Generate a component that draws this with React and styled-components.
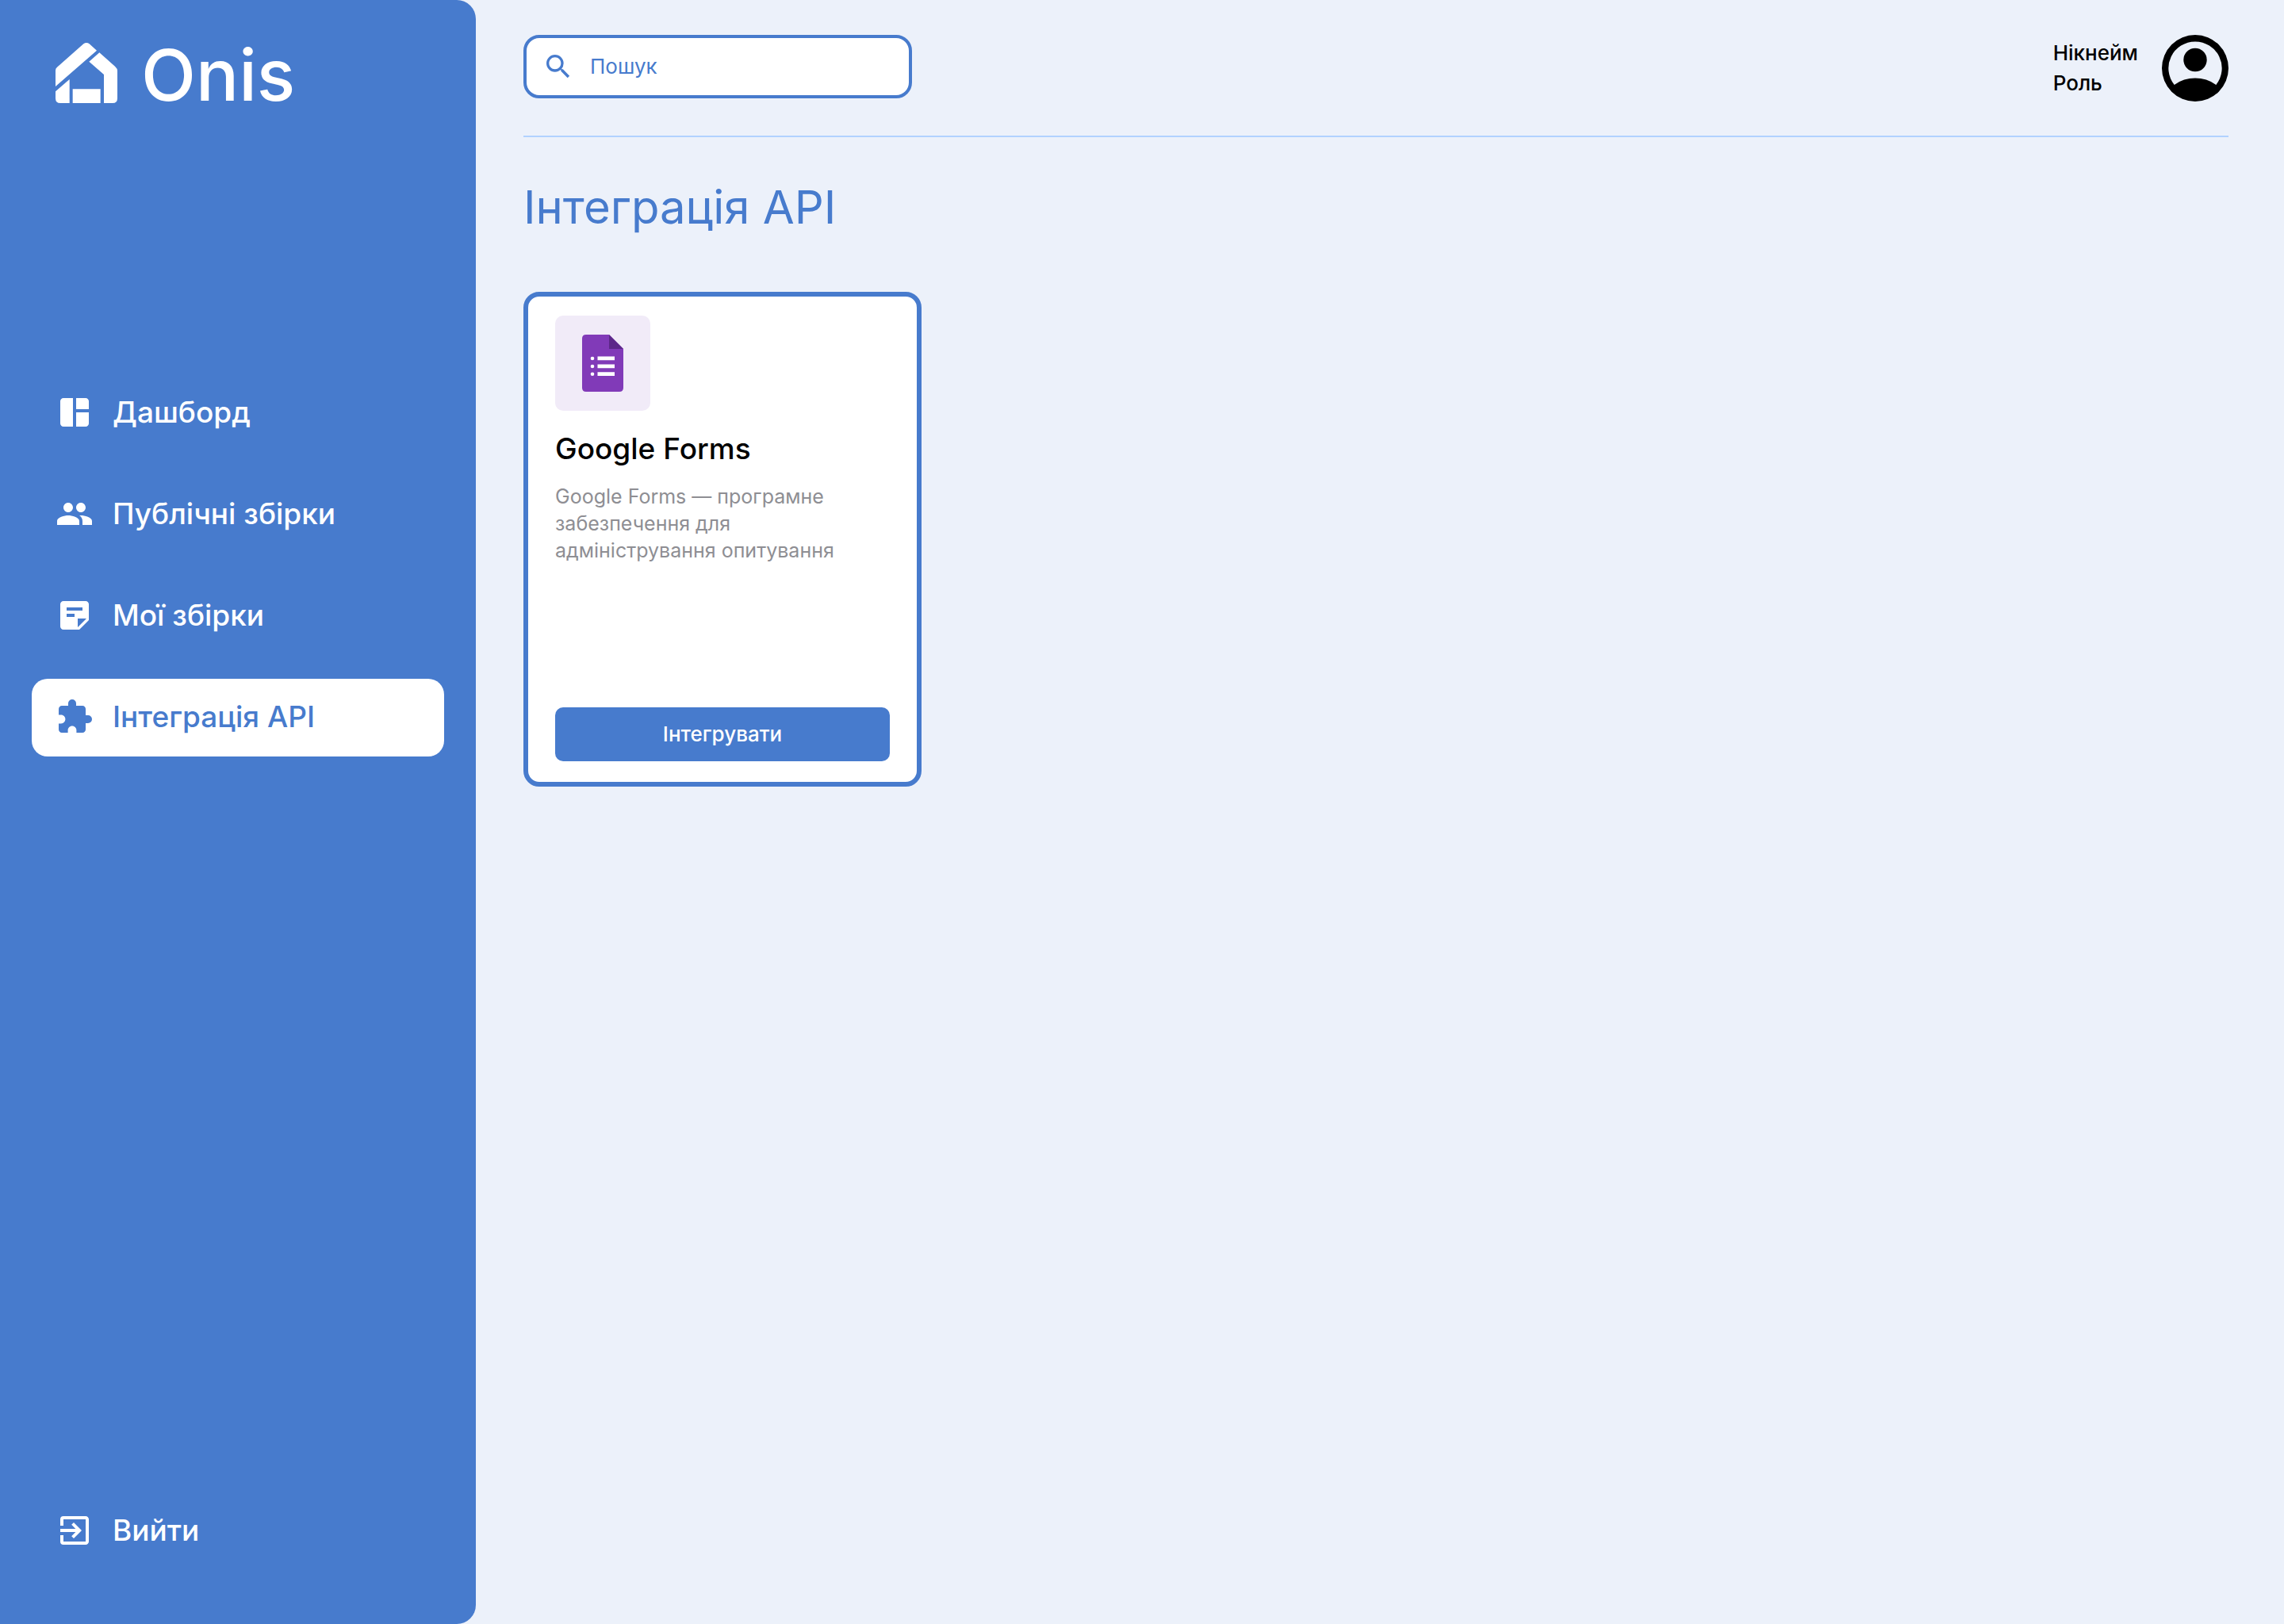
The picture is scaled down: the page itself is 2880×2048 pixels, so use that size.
import React from "react";
import styled, { createGlobalStyle, css } from "styled-components";
import {
  MdSpaceDashboard,
  MdPeople,
  MdExtension,
  MdExitToApp,
  MdSearch,
} from "react-icons/md";

const BLUE = "#477bcd";

const GlobalStyle = createGlobalStyle`
  *, *::before, *::after { box-sizing: border-box; }
  body {
    margin: 0;
    background: #ecf1fa;
    color: #000;
    font-family: Inter, "Liberation Sans", sans-serif;
  }
  h1, h2, p, ul { margin: 0; padding: 0; }
  button, input { font-family: inherit; }
`;

const Page = styled.div`
  display: grid;
  grid-template-columns: 600px 1fr;
  min-height: 100vh;
`;

const Sidebar = styled.aside`
  display: flex;
  flex-direction: column;
  padding: 36px 40px 68px;
  border-radius: 0 24px 24px 0;
  background: ${BLUE};
  color: #fff;
`;

const Brand = styled.a`
  display: flex;
  align-items: flex-end;
  gap: 30px;
  height: 94px;
  padding-left: 30px;
  color: inherit;
  text-decoration: none;
  font-size: 90px;
  line-height: 70px;
  font-weight: 500;
`;

const Menu = styled.ul`
  display: flex;
  flex-direction: column;
  gap: 30px;
  margin-top: 342px;
  list-style: none;
`;

const menuEntry = css`
  display: flex;
  align-items: center;
  gap: 24px;
  width: 100%;
  height: 98px;
  padding: 0 30px 2px;
  border: 0;
  border-radius: 20px;
  font-size: 37px;
  line-height: 48px;
  font-weight: 500;
  text-decoration: none;
  white-space: nowrap;

  svg { flex: none; width: 48px; height: 48px; }
`;

const MenuLink = styled.a`
  ${menuEntry}
  background: ${(p) => (p.$active ? "#fff" : "transparent")};
  color: ${(p) => (p.$active ? BLUE : "#fff")};
`;

const LogoutButton = styled.button`
  ${menuEntry}
  margin-top: auto;
  background: transparent;
  color: #fff;
  cursor: pointer;
`;

const Main = styled.main`
  min-width: 0;
  padding: 44px 70px 44px 60px;
`;

const TopBar = styled.header`
  display: flex;
  justify-content: space-between;
  align-items: flex-start;
  height: 129px;
  border-bottom: 2px solid #b1d2ff;
`;

const SearchField = styled.label`
  display: flex;
  align-items: center;
  gap: 20px;
  width: 490px;
  height: 80px;
  padding: 0 20px;
  border: 4px solid ${BLUE};
  border-radius: 20px;
  background: #fff;
  color: ${BLUE};

  svg { flex: none; width: 40px; height: 40px; }
`;

const SearchInput = styled.input`
  flex: 1;
  min-width: 0;
  padding: 0;
  border: 0;
  outline: 0;
  background: transparent;
  color: inherit;
  font-size: 26px;
  line-height: 34px;

  &::placeholder { color: inherit; opacity: 1; }
`;

const Profile = styled.div`
  display: flex;
  align-items: center;
  gap: 30px;

  svg { width: 84px; height: 84px; }
`;

const ProfileText = styled.div`
  font-size: 26px;
  line-height: 38px;
  font-weight: 500;
`;

const Title = styled.h1`
  margin-top: 50px;
  color: ${BLUE};
  font-size: 58px;
  line-height: 76px;
  font-weight: 400;
`;

const Cards = styled.section`
  display: flex;
  flex-wrap: wrap;
  gap: 40px;
  margin-top: 69px;
`;

const Card = styled.article`
  display: flex;
  flex-direction: column;
  width: 502px;
  min-height: 624px;
  padding: 24px 34px 26px;
  border: 6px solid ${BLUE};
  border-radius: 20px;
  background: #fff;
`;

const Tile = styled.div`
  display: grid;
  place-items: center;
  width: 120px;
  height: 120px;
  border-radius: 10px;
  background: #f1ebf8;
`;

const CardTitle = styled.h2`
  margin-top: 24px;
  font-size: 37px;
  line-height: 48px;
  font-weight: 500;
`;

const CardText = styled.p`
  margin-top: 19px;
  color: #8e8e93;
  font-size: 25px;
  line-height: 34px;
`;

const CardButton = styled.button`
  height: 68px;
  margin-top: auto;
  border: 0;
  border-radius: 10px;
  background: ${BLUE};
  color: #fff;
  font-size: 26px;
  line-height: 34px;
  font-weight: 500;
  cursor: pointer;
`;

const HouseLogo = () => (
  <svg width="78" height="76" viewBox="30 42 234 228" fill="currentColor" aria-hidden="true">
    <path d="M30 146Q30 139 36 134L136 46Q147 38 158 46L186 71L30 207Z" />
    <path d="M196 79L255 131Q264 139 264 148V252Q264 270 246 270H213V162L157 113Z" />
    <path d="M83 180V270H48Q30 270 30 252V226Z" />
    <path d="M95 217H200V270H95Z" />
  </svg>
);

const NoteIcon = () => (
  <svg viewBox="0 0 24 24" fill="currentColor" aria-hidden="true">
    <path
      fillRule="evenodd"
      d="M5 3H19C20.1 3 21 3.9 21 5V15L15 21H5C3.9 21 3 20.1 3 19V5C3 3.9 3.9 3 5 3ZM7 7V9H17V7ZM7 11V13H12V11ZM14 14V19.5L19.5 14Z"
    />
  </svg>
);

const Avatar = () => (
  <svg viewBox="2 2 20 20" role="img" aria-label="Нікнейм">
    <path
      fillRule="evenodd"
      d="M12 2A10 10 0 1 0 12 22A10 10 0 1 0 12 2ZM12 4A8 8 0 0 1 18.26 17A10.6 10.6 0 0 0 5.74 17A8 8 0 0 1 12 4Z"
    />
    <circle cx="12" cy="9.5" r="3.5" />
  </svg>
);

const FormsIcon = () => (
  <svg width="52" height="72" viewBox="0 0 52 72" aria-hidden="true">
    <path fill="#813ab8" d="M5 0H34L52 18V67Q52 72 47 72H5Q0 72 0 67V5Q0 0 5 0Z" />
    <path fill="#5c2889" d="M34 0L52 18H34Z" />
    <g fill="#fff">
      <circle cx="13" cy="30" r="2.3" />
      <circle cx="13" cy="40" r="2.3" />
      <circle cx="13" cy="49.7" r="2.3" />
      <path d="M19.5 27.5H41V32.3H19.5ZM19.5 37.5H41V42.3H19.5ZM19.5 47.3H41V52H19.5Z" />
    </g>
  </svg>
);

const menu = [
  { label: "Дашборд", Icon: MdSpaceDashboard },
  { label: "Публічні збірки", Icon: MdPeople },
  { label: "Мої збірки", Icon: NoteIcon },
  { label: "Інтеграція API", Icon: MdExtension, active: true },
];

export default function App() {
  return (
    <>
      <GlobalStyle />
      <Page>
        <Sidebar>
          <Brand href="#">
            <HouseLogo />
            Onis
          </Brand>
          <nav>
            <Menu>
              {menu.map(({ label, Icon, active }) => (
                <li key={label}>
                  <MenuLink href="#" $active={active} aria-current={active ? "page" : undefined}>
                    <Icon />
                    {label}
                  </MenuLink>
                </li>
              ))}
            </Menu>
          </nav>
          <LogoutButton type="button">
            <MdExitToApp />
            Вийти
          </LogoutButton>
        </Sidebar>
        <Main>
          <TopBar>
            <SearchField>
              <MdSearch />
              <SearchInput type="search" placeholder="Пошук" aria-label="Пошук" />
            </SearchField>
            <Profile>
              <ProfileText>
                <p>Нікнейм</p>
                <p>Роль</p>
              </ProfileText>
              <Avatar />
            </Profile>
          </TopBar>
          <Title>Інтеграція API</Title>
          <Cards>
            <Card>
              <Tile>
                <FormsIcon />
              </Tile>
              <CardTitle>Google Forms</CardTitle>
              <CardText>Google Forms — програмне забезпечення для адміністрування опитування</CardText>
              <CardButton type="button">Інтегрувати</CardButton>
            </Card>
          </Cards>
        </Main>
      </Page>
    </>
  );
}
